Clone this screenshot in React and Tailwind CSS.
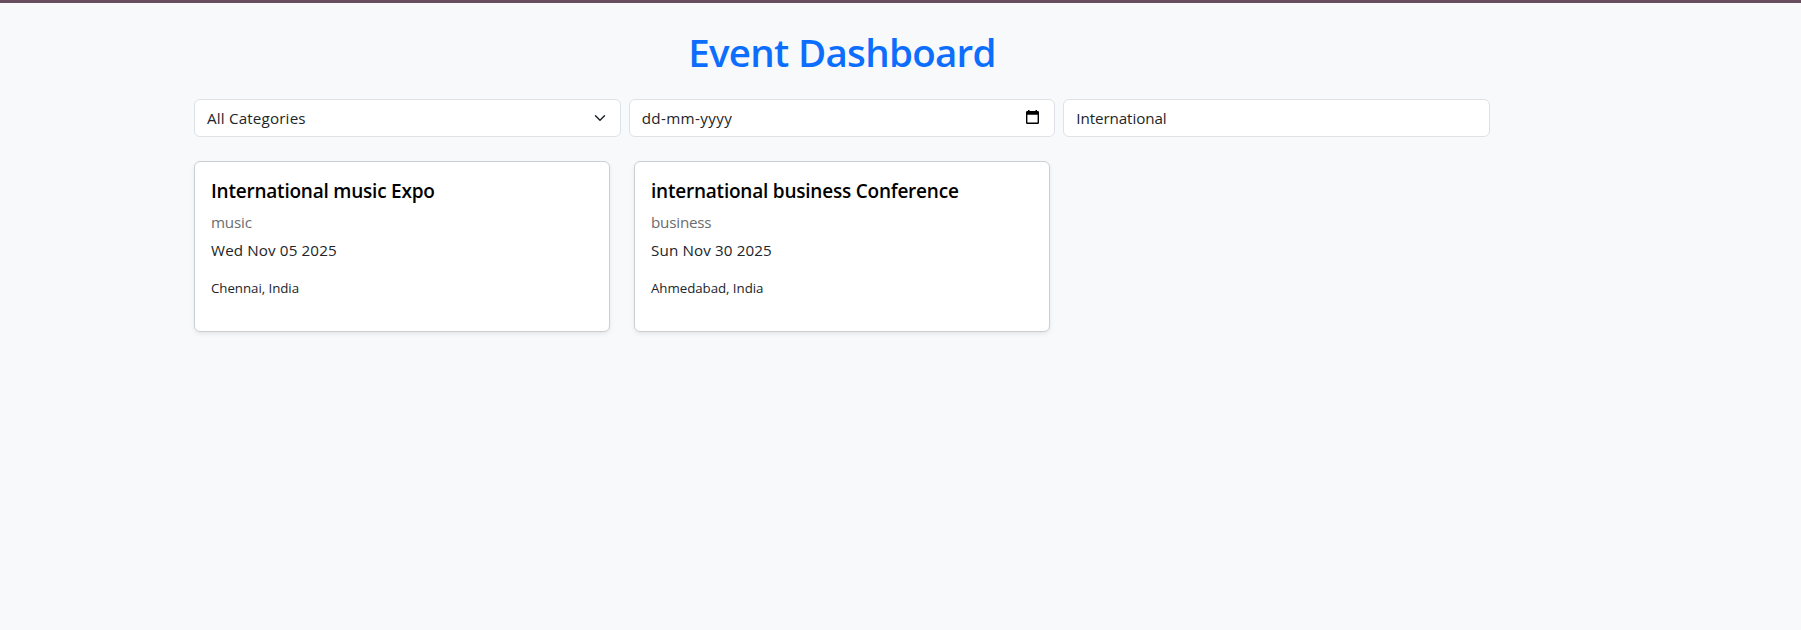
import React from "react";

const events = [
  {
    title: "International music Expo",
    category: "music",
    date: "Wed Nov 05 2025",
    place: "Chennai, India",
  },
  {
    title: "international business Conference",
    category: "business",
    date: "Sun Nov 30 2025",
    place: "Ahmedabad, India",
  },
];

function Field({ children }) {
  return (
    <div className="flex h-[38px] flex-1 items-center justify-between rounded-md border border-[#dee2e6] bg-white px-3 text-[15.2px] text-[#212529]">
      {children}
    </div>
  );
}

function EventCard({ event }) {
  return (
    <article className="h-[171px] w-[416px] rounded-md border border-[#cccfd2] bg-white p-4 shadow-[0_2px_4px_rgba(0,0,0,0.075)]">
      <h5 className="mt-px mb-[7px] text-[19px] leading-6 font-semibold tracking-[-0.22px] text-black">{event.title}</h5>
      <p className="mb-1 text-[15.2px] leading-6 tracking-[-0.2px] text-[#6a6d70]">{event.category}</p>
      <p className="mb-4 text-[15.2px] leading-6 tracking-[0.12px] text-[#212529]">{event.date}</p>
      <p className="text-[13.3px] leading-[21px] tracking-[-0.05px] text-[#212529]">{event.place}</p>
    </article>
  );
}

export default function App() {
  return (
    <div className="h-[630px] w-full overflow-hidden border-t-[3px] border-[#684f60] bg-[#f8f9fa] font-['Open_Sans','Noto_Sans',sans-serif]">
      <main className="ml-[194px] w-[1296px]">
        <h1 className="mt-[25px] mb-[23px] text-center text-[38.5px] leading-[48px] font-semibold tracking-[-0.7px] text-[#0d6efd]">
          Event Dashboard
        </h1>
        <div className="mb-6 flex gap-2">
          <Field>
            <span className="tracking-[0.17px]">All Categories</span>
            <svg className="h-3 w-4" viewBox="0 0 16 16" fill="none" stroke="#212529" strokeWidth="2" strokeLinecap="round" strokeLinejoin="round">
              <path d="m2 5 6 6 6-6" />
            </svg>
          </Field>
          <Field>
            <span className="tracking-[0.35px]">dd-mm-yyyy</span>
            <svg className="mr-[3px] mb-0.5 h-[14px] w-[13px]" viewBox="0 0 13 14">
              <path fill="#000" fillRule="evenodd" d="M2 0h1.5v1h6V0H11v1h.7Q13 1 13 2.300v10.400Q13 14 11.700 14H1.300Q0 14 0 12.700V2.300Q0 1 1.300 1H2zM1.400 4.800v7.800h10.200V4.800z" />
            </svg>
          </Field>
          <Field>
            <span className="tracking-[-0.1px]">International</span>
          </Field>
        </div>
        <section className="flex gap-6">
          {events.map((event) => (
            <EventCard key={event.title} event={event} />
          ))}
        </section>
      </main>
    </div>
  );
}
